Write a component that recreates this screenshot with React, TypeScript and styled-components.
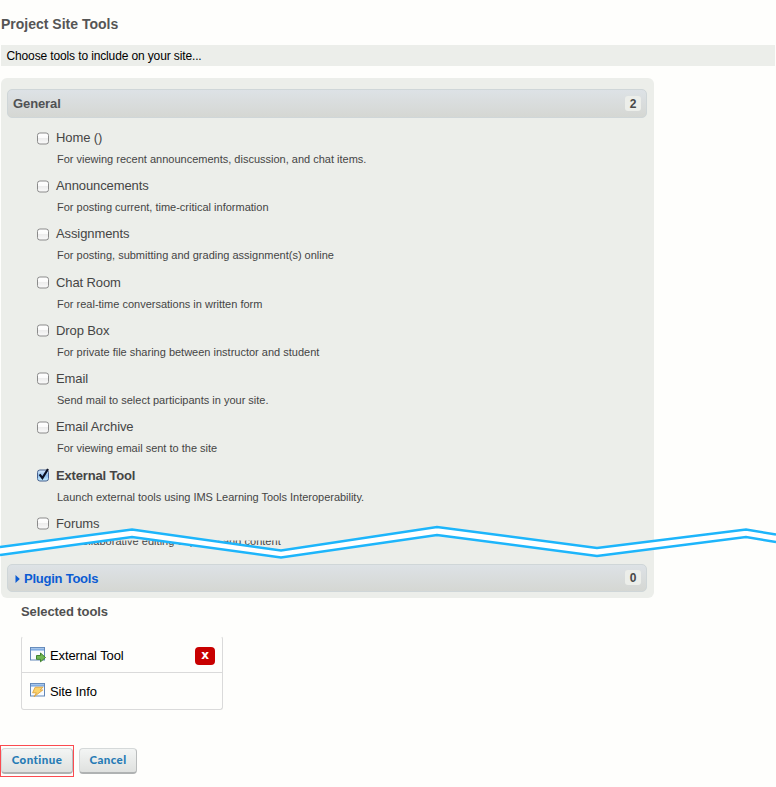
import React from "react";
import styled, { createGlobalStyle } from "styled-components";

const GlobalStyle = createGlobalStyle`
  body {
    margin: 0;
    background: #fefefc;
    font-family: "Liberation Sans", Arial, sans-serif;
    color: #4c4c4c;
    overflow: hidden;
  }
  * { box-sizing: border-box; }
`;

const Page = styled.main`
  position: relative;
  width: 776px;
  height: 787px;
  padding: 15px 1px 0;
  overflow: hidden;
`;

const Title = styled.h1`
  margin: 0;
  height: 30px;
  font-size: 14px;
  line-height: 18px;
  letter-spacing: 0;
  color: #555;
`;

const Instruction = styled.p`
  margin: 0 0 12px;
  height: 21px;
  padding-left: 5.5px;
  background: #eceeea;
  font-size: 12px;
  line-height: 22px;
  letter-spacing: -0.13px;
  color: #000;
`;

const Panel = styled.section`
  width: 653px;
  height: 520px;
  padding: 11px 7px 0 6px;
  border-radius: 6px;
  background: #eceeea;
`;

const GroupBar = styled.header<{ $height: number }>`
  display: flex;
  align-items: center;
  height: ${(p) => p.$height}px;
  padding: 0 5px 0 5px;
  border: 1px solid #cfd6d8;
  border-radius: 5px;
  background: linear-gradient(#dde2e6, #d5d7d3);
`;

const GroupName = styled.h2<{ $link?: boolean }>`
  flex: 1;
  display: flex;
  align-items: center;
  gap: 4px;
  margin: 0;
  padding: ${(p) => (p.$link ? "2px 0 0 2px" : "0")};
  font-size: 13px;
  line-height: 18px;
  letter-spacing: ${(p) => (p.$link ? "-0.24px" : "-0.1px")};
  color: ${(p) => (p.$link ? "#0b5bd3" : "#505254")};
`;

const Count = styled.span`
  width: 16px;
  height: 15px;
  margin-bottom: 1px;
  border-radius: 3px;
  background: #eceeea;
  text-align: center;
  font-size: 12px;
  line-height: 16px;
  font-weight: bold;
  color: #484848;
`;

const ToolList = styled.ul`
  height: 446px;
  margin: 0;
  padding: 10px 0 0 29px;
  list-style: none;
  overflow: hidden;
`;

const Tool = styled.li`
  height: 48.2px;
`;

const ToolLabel = styled.label<{ $checked?: boolean }>`
  display: flex;
  align-items: center;
  gap: 6px;
  height: 20px;
  font-size: 13px;
  line-height: ${(p) => (p.$checked ? "21px" : "20px")};
  letter-spacing: ${(p) => (p.$checked ? "-0.16px" : "-0.1px")};
  font-weight: ${(p) => (p.$checked ? "bold" : "normal")};
  color: #454545;
  svg { margin-top: -1px; }
`;

const Description = styled.p<{ $clipped?: boolean; $checked?: boolean }>`
  margin: ${(p) => (p.$clipped ? "-1px" : p.$checked ? "4px" : "3px")} 0 0 21px;
  height: 16px;
  font-size: 11px;
  line-height: 16px;
  letter-spacing: ${(p) => (p.$checked ? "-0.02px" : p.$clipped ? "0.025px" : "0")};
  white-space: nowrap;
  color: #454545;
  clip-path: ${(p) => (p.$clipped ? "inset(8px 0 0 0)" : "none")};
`;

const SelectedTitle = styled.h3`
  margin: 4px 0 0 20px;
  height: 34px;
  font-size: 13px;
  line-height: 19px;
  letter-spacing: -0.08px;
  color: #505050;
`;

const SelectedList = styled.ul`
  width: 202px;
  height: 74px;
  margin: 0 0 35px 20px;
  padding: 0;
  list-style: none;
  border: 1px solid #dadada;
  border-top-color: transparent;
  border-radius: 3px;
`;

const SelectedItem = styled.li`
  display: flex;
  align-items: center;
  gap: 4px;
  height: 35px;
  padding: 1px 7px 0 8px;
  font-size: 13px;
  letter-spacing: -0.1px;
  color: #000;
  & + & {
    height: 37px;
    border-top: 1px solid #dadada;
    padding-top: 0;
  }
`;

const RemoveButton = styled.button`
  width: 20px;
  height: 18px;
  margin: 1px 0 0 auto;
  padding: 0 0 2px;
  border: 0;
  border-radius: 4px;
  background: #c80000;
  color: #fff;
  font: bold 12px/16px "DejaVu Sans", sans-serif;
`;

const Actions = styled.div`
  display: flex;
  gap: 5px;
  margin-left: -1px;
`;

const HighlightFrame = styled.div`
  display: flex;
  align-items: center;
  justify-content: center;
  width: 74px;
  height: 32px;
  border: 1px solid #fb4b50;
`;

const ActionButton = styled.button<{ $width: number }>`
  width: ${(p) => p.$width}px;
  height: 26px;
  padding: 0 0 1px;
  border: 1px solid #d5d9d9;
  border-bottom: 2px solid #afb2b2;
  border-right-color: #b9bcbc;
  border-radius: 4px;
  background: linear-gradient(#f3f5f4, #dfe1df);
  color: #267bb5;
  font: 900 11.5px/18px Lato, sans-serif;
  letter-spacing: 0.45px;
`;

const CancelSlot = styled.div`
  padding-top: 3px;
`;

const TearLayer = styled.svg`
  position: absolute;
  left: 0;
  top: 520px;
  pointer-events: none;
`;

const CheckBox = ({ checked }: { checked?: boolean }) => (
  <svg width="14" height="14" viewBox="0 0 14 14">
    <defs>
      <linearGradient id="boxOff" x1="0" y1="0" x2="0" y2="1">
        <stop offset="0" stopColor="#fff" />
        <stop offset="0.45" stopColor="#fbfbfb" />
        <stop offset="0.5" stopColor="#ededed" />
        <stop offset="1" stopColor="#fafafa" />
      </linearGradient>
      <linearGradient id="boxOn" x1="0" y1="0" x2="0" y2="1">
        <stop offset="0" stopColor="#dcecfa" />
        <stop offset="0.5" stopColor="#8fbeee" />
        <stop offset="1" stopColor="#c9f0ff" />
      </linearGradient>
    </defs>
    <rect x="1.5" y="2" width="11" height="11" rx="2.4" fill={checked ? "url(#boxOn)" : "url(#boxOff)"} stroke={checked ? "#47618f" : "#8b8b8b"} />
    {checked && <path d="M3.6 6.4 6.4 10 12 1" fill="none" stroke="#0a1022" strokeWidth="2.2" />}
  </svg>
);

const WindowFrame = () => (
  <>
    <rect x="0.5" y="0.5" width="14" height="12.5" fill="#f8fbfe" stroke="#6287b8" />
    <path d="M1 2.3h13" stroke="#83aee3" strokeWidth="2.6" />
    <path d="M1 1.4h13" stroke="#b5d0ef" strokeWidth="0.8" />
  </>
);

const ExternalIcon = () => (
  <svg width="16" height="16" viewBox="0 0 16 16">
    <WindowFrame />
    <path d="M6.5 8.5h4V6l5 4.5-5 4.3v-2.5h-4z" fill="#72b854" stroke="#40822e" strokeWidth="1" />
  </svg>
);

const InfoIcon = () => (
  <svg width="16" height="16" viewBox="0 0 16 16">
    <WindowFrame />
    <path d="M5.2 4.2H13L10.2 7h2.6L4 13.8l2.4-4H2.6z" fill="#fbd36b" stroke="#dda33c" strokeWidth="0.9" />
  </svg>
);

const tools = [
  { name: "Home ()", text: "For viewing recent announcements, discussion, and chat items." },
  { name: "Announcements", text: "For posting current, time-critical information" },
  { name: "Assignments", text: "For posting, submitting and grading assignment(s) online" },
  { name: "Chat Room", text: "For real-time conversations in written form" },
  { name: "Drop Box", text: "For private file sharing between instructor and student" },
  { name: "Email", text: "Send mail to select participants in your site." },
  { name: "Email Archive", text: "For viewing email sent to the site" },
  { name: "External Tool", text: "Launch external tools using IMS Learning Tools Interoperability.", checked: true },
  { name: "Forums", text: "For collaborative editing of pages and content", clipped: true },
];

const upperEdge = "0,27 132,9.5 281,30.5 437,7 597,28 746,9.5 776,14.5";
const lowerEdge = "0,35 132,17 281,37.5 437,15 597,36 746,17 776,22";

export default function App() {
  return (
    <Page>
      <GlobalStyle />
      <Title>Project Site Tools</Title>
      <Instruction>Choose tools to include on your site...</Instruction>
      <Panel>
        <GroupBar $height={29}>
          <GroupName>General</GroupName>
          <Count>2</Count>
        </GroupBar>
        <ToolList>
          {tools.map((t) => (
            <Tool key={t.name}>
              <ToolLabel $checked={t.checked}>
                <CheckBox checked={t.checked} />
                {t.name}
              </ToolLabel>
              <Description $clipped={t.clipped} $checked={t.checked}>{t.text}</Description>
            </Tool>
          ))}
        </ToolList>
        <GroupBar $height={28}>
          <GroupName $link>
            <svg width="5" height="8" viewBox="0 0 5 8"><path d="M0.5 0 4.8 4 .5 8z" fill="#0b5bd3" /></svg>
            Plugin Tools
          </GroupName>
          <Count>0</Count>
        </GroupBar>
      </Panel>
      <SelectedTitle>Selected tools</SelectedTitle>
      <SelectedList>
        <SelectedItem>
          <ExternalIcon />
          External Tool
          <RemoveButton>x</RemoveButton>
        </SelectedItem>
        <SelectedItem>
          <InfoIcon />
          Site Info
        </SelectedItem>
      </SelectedList>
      <Actions>
        <HighlightFrame>
          <ActionButton $width={72}>Continue</ActionButton>
        </HighlightFrame>
        <CancelSlot>
          <ActionButton $width={58}>Cancel</ActionButton>
        </CancelSlot>
      </Actions>
      <TearLayer width="776" height="44" viewBox="0 0 776 44">
        <polygon points={`${upperEdge} ${lowerEdge.split(" ").reverse().join(" ")}`} fill="#fff" />
        <polyline points={upperEdge} fill="none" stroke="#1db5fb" strokeWidth="2.4" />
        <polyline points={lowerEdge} fill="none" stroke="#1db5fb" strokeWidth="2.4" />
      </TearLayer>
    </Page>
  );
}
